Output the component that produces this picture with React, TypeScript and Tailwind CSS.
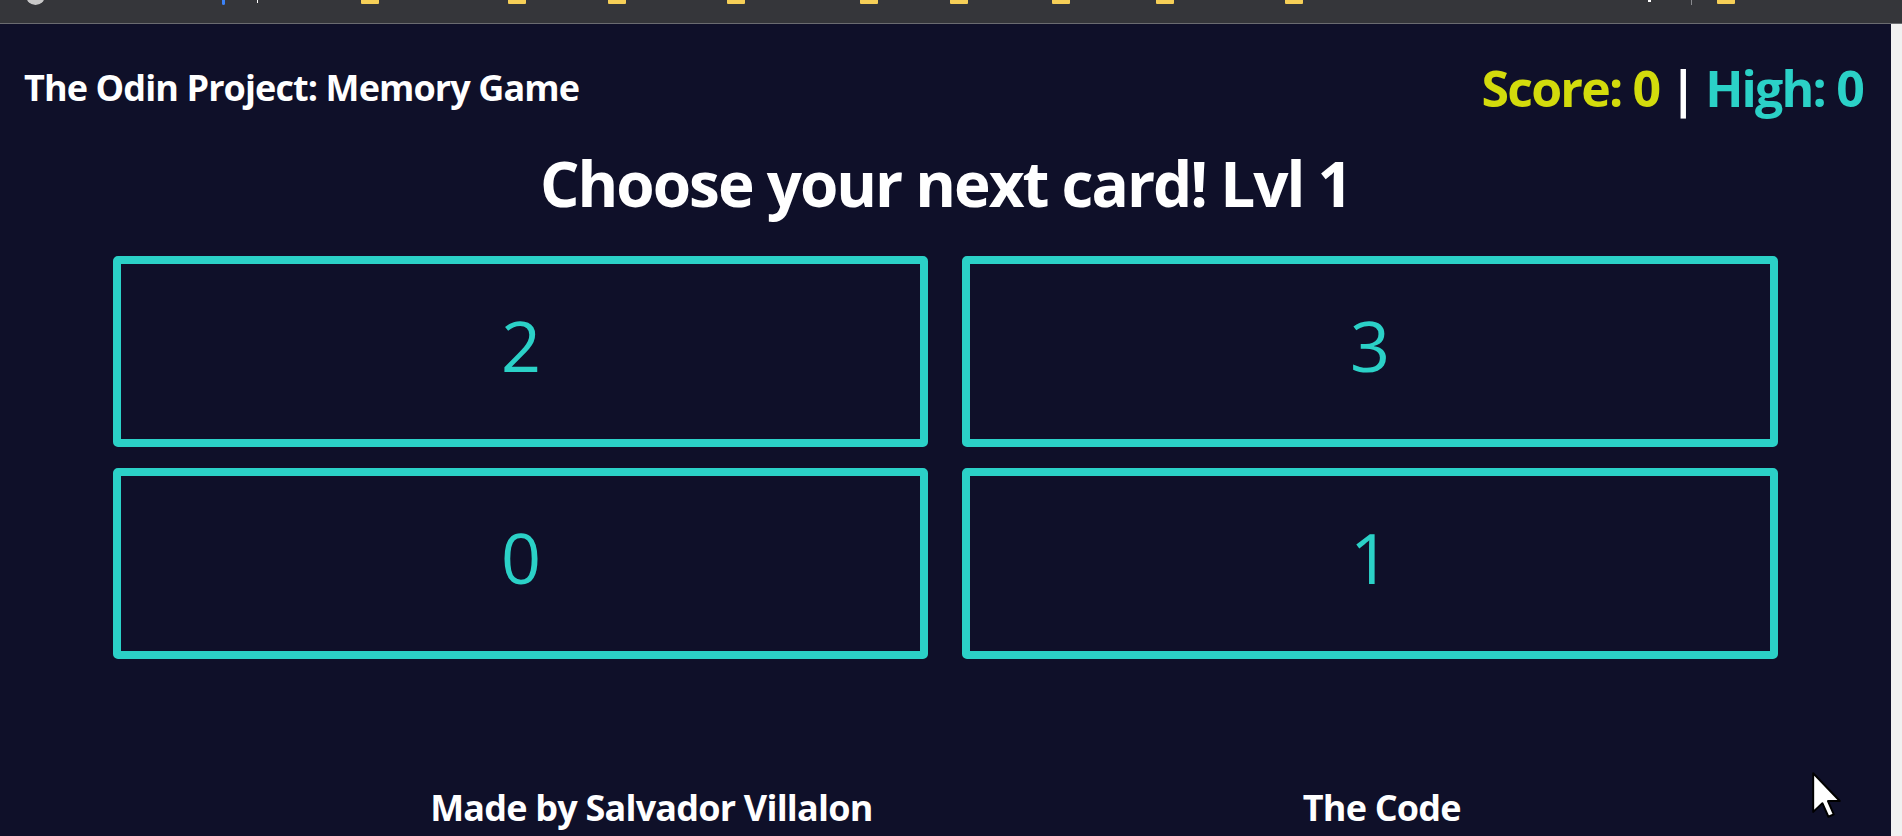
import React from "react";

const folders = [361, 508, 608, 727, 860, 950, 1052, 1156, 1285, 1717];

function ChromeBar() {
  return (
    <div className="relative h-[24px] w-full shrink-0 bg-[#35363a] border-b border-[#6b6c70]">
      <div className="absolute left-[26px] top-[-14px] h-[19px] w-[19px] rounded-full bg-[#c8c8c8]" />
      <div className="absolute left-[222px] top-0 h-[5px] w-[3px] rounded-b bg-[#3b82f6]" />
      <div className="absolute left-[257px] top-0 h-[3px] w-[1px] bg-white" />
      {folders.map((x) => (
        <div
          key={x}
          className="absolute top-0 h-[4px] w-[18px] rounded-b-[1px] bg-[#f6cf57]"
          style={{ left: x }}
        />
      ))}
      <div className="absolute left-[1648px] top-0 h-[2px] w-[3px] bg-white" />
      <div className="absolute left-[1691px] top-0 h-[5px] w-[1px] bg-[#8a8b8f]" />
    </div>
  );
}

function Card({ n }: { n: number }) {
  return (
    <div className="flex h-[191px] items-center justify-center rounded-[5px] border-[8px] border-[#2bd1c7] pb-[14px]">
      <span className="text-[70px] font-normal leading-none text-[#2bd1c7]">{n}</span>
    </div>
  );
}

export default function App() {
  return (
    <div
      className="relative flex h-[836px] w-full flex-col overflow-hidden bg-[#0f1029]"
      style={{ fontFamily: '"Open Sans", "Noto Sans", sans-serif' }}
    >
      <ChromeBar />
      <div className="flex min-h-0 flex-1">
        <main className="flex min-w-0 flex-1 flex-col">
          <header className="flex h-[128px] items-center justify-between pl-[24px] pr-[28px]">
            <h2 className="text-[36px] font-bold leading-none tracking-[-0.9px] text-white">
              The Odin Project: Memory Game
            </h2>
            <div className="flex items-center gap-[10px] text-[50px] font-bold leading-none tracking-[-1.8px]">
              <span className="text-[#d3db0c]">Score: 0</span>
              <span className="text-white">|</span>
              <span className="text-[#2bd1c7]">High: 0</span>
            </div>
          </header>
          <h1 className="text-center text-[62px] font-bold leading-none tracking-[-2px] text-white">
            Choose your next card! Lvl 1
          </h1>
          <div className="mx-auto mt-[42px] grid w-[88%] grid-cols-2 gap-x-[34px] gap-y-[21px]">
            <Card n={2} />
            <Card n={3} />
            <Card n={0} />
            <Card n={1} />
          </div>
          <footer className="mt-[131px] flex justify-evenly text-[36px] font-bold leading-none tracking-[-0.8px] text-white">
            <span>Made by Salvador Villalon</span>
            <span>The Code</span>
          </footer>
        </main>
        <div className="w-[11px] shrink-0 bg-[#f1f1f1]" />
      </div>
      <svg
        className="absolute left-[1812px] top-[772px]"
        width="29"
        height="46"
        viewBox="0 0 12 19"
      >
        <path
          d="M0.5 0.5 L0.5 16.5 L4.3 12.9 L6.8 18.5 L9 17.5 L6.6 12 L11.5 12 Z"
          fill="white"
          stroke="black"
          strokeWidth="0.8"
          strokeLinejoin="round"
        />
      </svg>
    </div>
  );
}
